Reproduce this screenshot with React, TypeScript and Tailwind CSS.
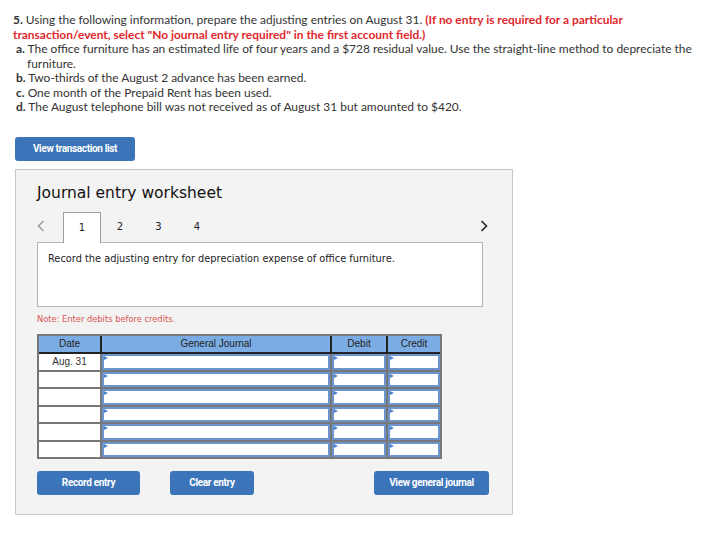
import React from "react";

const rowHeights = [16, 15, 16, 15, 16, 15];

function Tri() {
  return (
    <span className="absolute left-0 top-0 h-0 w-0 border-y-[2.5px] border-l-[4px] border-y-transparent border-l-[#4a82cc]" />
  );
}

function InputCell({ h }: { h: number }) {
  return (
    <div
      className="relative bg-white border-2 border-[#6b95cc]"
      style={{ height: h }}
    >
      <Tri />
    </div>
  );
}

function Btn({ children, className }: { children: React.ReactNode; className: string }) {
  return (
    <button
      className={`${className} block h-[24px] rounded-[3px] bg-[#3b74b9] text-white text-[10px] leading-[24px] font-bold tracking-[-0.35px] font-[Roboto,sans-serif]`}
    >
      {children}
    </button>
  );
}

export default function App() {
  return (
    <div className="w-[708px] h-[544px] bg-white text-[#333] font-[Lato,sans-serif] overflow-hidden">
      <div className="pt-[13px] pl-[13px] pr-[4px] text-[11.95px] leading-[14.5px] whitespace-nowrap">
        <p>
          <span className="font-bold">5.</span> Using the following information, prepare the adjusting entries on August 31.{" "}
          <span className="font-bold text-[#e0282c]">(If no entry is required for a particular</span>
          <br />
          <span className="font-bold text-[#e0282c]">
            transaction/event, select "No journal entry required" in the first account field.)
          </span>
        </p>
        <div className="pl-[3px]">
          <p className="pl-[11px] -indent-[11px]">
            <span className="font-bold">a.</span> The office furniture has an estimated life of four years and a $728 residual value. Use the straight-line method to depreciate the
            <br />
            furniture.
          </p>
          <p>
            <span className="font-bold">b.</span> Two-thirds of the August 2 advance has been earned.
          </p>
          <p>
            <span className="font-bold">c.</span> One month of the Prepaid Rent has been used.
          </p>
          <p>
            <span className="font-bold">d.</span> The August telephone bill was not received as of August 31 but amounted to $420.
          </p>
        </div>
      </div>

      <div className="flex pl-[15px] mt-[22px]">
        <Btn className="w-[120px]">View transaction list</Btn>
      </div>

      <div className="ml-[15px] mt-[8px] w-[498px] border border-[#c8c8c8] bg-[#f3f3f3] pl-[21px] pr-[29px] pt-[13px] pb-[19px]">
        <h2 className="text-[15.5px] leading-[20px] text-[#111] font-['DejaVu_Sans',sans-serif]">
          Journal entry worksheet
        </h2>

        <div className="mt-[9px] flex items-end justify-between h-[30px] font-['DejaVu_Sans',sans-serif]">
          <div className="flex items-end h-full">
            <div className="w-[26px] h-full flex items-center pb-[2px]">
              <svg width="8" height="12" viewBox="0 0 8 12">
                <path d="M6.5 1 L1.5 6 L6.5 11" fill="none" stroke="#a0a0a0" strokeWidth="1.6" />
              </svg>
            </div>
            <div className="relative z-10 w-[38px] h-[31px] -mb-[1px] bg-white border border-b-0 border-[#a0a0a0] flex items-center justify-center text-[10px] text-[#222]">
              1
            </div>
            <div className="w-[38px] h-full flex items-center justify-center text-[10px] text-[#222]">2</div>
            <div className="w-[39px] h-full flex items-center justify-center text-[10px] text-[#222]">3</div>
            <div className="w-[38px] h-full flex items-center justify-center text-[10px] text-[#222]">4</div>
          </div>
          <div className="h-full flex items-center -mr-[5px] pb-[2px]">
            <svg width="8" height="12" viewBox="0 0 8 12">
              <path d="M1.5 1 L6.5 6 L1.5 11" fill="none" stroke="#222" strokeWidth="1.6" />
            </svg>
          </div>
        </div>

        <div className="h-[65px] bg-white border border-[#b5b5b5] pl-[10px] pt-[9px] text-[9.8px] leading-[14px] text-[#222] font-['DejaVu_Sans',sans-serif]">
          Record the adjusting entry for depreciation expense of office furniture.
        </div>

        <p className="mt-[7px] text-[8.3px] leading-[11px] text-[#d9534f] font-['DejaVu_Sans',sans-serif]">
          Note: Enter debits before credits.
        </p>

        <div className="mt-[9px] w-[405px] border-2 border-[#777] bg-[#777] font-['Liberation_Sans',sans-serif]">
          <div className="grid grid-cols-[61px_228px_54px_52px] gap-x-[2px] border-b-2 border-[#222] bg-[#222]">
            <div className="h-[16px] bg-[#7bade4] flex items-center justify-center text-[10px] text-[#222]">Date</div>
            <div className="h-[16px] bg-[#7bade4] flex items-center justify-center text-[10px] text-[#222]">General Journal</div>
            <div className="h-[16px] bg-[#7bade4] flex items-center justify-center text-[10px] text-[#222]">Debit</div>
            <div className="h-[16px] bg-[#7bade4] flex items-center justify-center text-[10px] text-[#222]">Credit</div>
          </div>
          <div className="flex flex-col gap-y-[2px]">
            {rowHeights.map((h, i) => (
              <div key={i} className="grid grid-cols-[61px_228px_54px_52px] gap-x-[2px]">
                <div
                  className="bg-white flex items-center justify-center text-[10px] text-[#333]"
                  style={{ height: h }}
                >
                  {i === 0 ? "Aug. 31" : ""}
                </div>
                <InputCell h={h} />
                <InputCell h={h} />
                <InputCell h={h} />
              </div>
            ))}
          </div>
        </div>

        <div className="mt-[12px] flex items-center">
          <Btn className="w-[103px]">Record entry</Btn>
          <Btn className="ml-[30px] w-[84px]">Clear entry</Btn>
          <Btn className="ml-auto -mr-[6px] w-[115px]">View general journal</Btn>
        </div>
      </div>
    </div>
  );
}
